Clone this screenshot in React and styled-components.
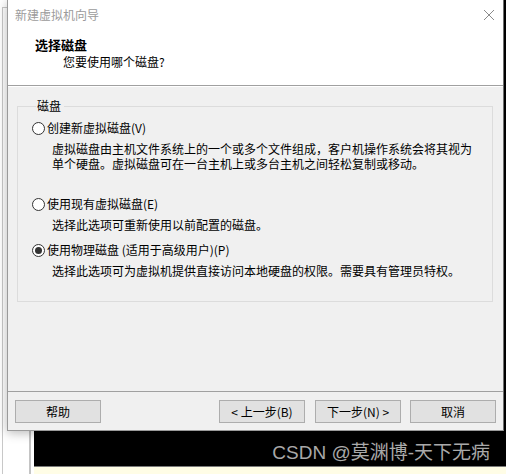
import React from "react";
import styled, { createGlobalStyle } from "styled-components";

const GlobalStyle = createGlobalStyle`
  html, body {
    margin: 0;
    padding: 0;
    background: #fff;
  }
  body {
    font-family: "Noto Sans CJK SC", "Noto Sans", sans-serif;
    font-size: 12px;
    color: #000;
  }
`;

const Desktop = styled.div`
  position: relative;
  width: 506px;
  height: 474px;
  overflow: hidden;
  background: #fff;
`;

const BackEdge = styled.div`
  position: absolute;
  left: 2px;
  top: 7px;
  width: 20px;
  bottom: 0;
  border-left: 1px solid #c8c8c8;
  border-top: 1px solid #c8c8c8;
`;

const Console = styled.div`
  position: absolute;
  left: 29px;
  top: 0;
  right: 0;
  bottom: 0;
  display: flex;
  border-left: 2px solid #c4c4c4;
  padding-left: 3px;
  background: #fff;
`;

const ConsolePane = styled.div`
  flex: 1;
  display: flex;
  flex-direction: column;
`;

const ConsoleBlack = styled.div`
  height: 466px;
  background: #000;
  border-bottom: 1px solid #7a7a7a;
`;

const ConsoleYellow = styled.div`
  flex: 1;
  background: #fffde6;
`;

const Watermark = styled.div`
  position: absolute;
  right: 16px;
  top: 441px;
  font-family: "Liberation Sans", "Noto Sans CJK SC", sans-serif;
  font-size: 19px;
  line-height: 24px;
  color: #a9a9a9;
  white-space: nowrap;
`;

const Window = styled.div`
  position: absolute;
  left: 7px;
  top: 0;
  width: 497px;
  height: 431px;
  box-sizing: border-box;
  border-left: 1px solid #9a9a9a;
  border-right: 1px solid #6e6e6e;
  border-bottom: 1px solid #9a9a9a;
  display: flex;
  flex-direction: column;
  box-shadow: 0 2px 10px rgba(0, 0, 0, 0.28);
  background: #f0f0f0;
`;

const TitleBar = styled.div`
  height: 30px;
  flex-shrink: 0;
  background: #fff;
  display: flex;
  align-items: center;
  justify-content: space-between;
  padding: 0 8px 0 7px;
`;

const TitleText = styled.span`
  color: #9b9b9b;
  font-size: 12px;
  line-height: 16px;
`;

const Header = styled.div`
  height: 56px;
  flex-shrink: 0;
  box-sizing: border-box;
  background: #fff;
  border-bottom: 1px solid #a0a0a0;
  padding-top: 7px;
`;

const HeaderTitle = styled.div`
  padding-left: 27px;
  font-size: 13px;
  font-weight: 700;
  line-height: 16px;
`;

const HeaderSub = styled.div`
  padding-left: 55px;
  margin-top: 1px;
  font-size: 12px;
  line-height: 16px;
`;

const Body = styled.div`
  flex: 1;
  display: flex;
  flex-direction: column;
  padding-top: 11px;
  border-top: 1px solid #fff;
`;

const Group = styled.fieldset`
  margin: 0 10px 0 9px;
  padding: 6px 14px 23px 14px;
  border: 1px solid #dcdcdc;
  display: flex;
  flex-direction: column;
`;

const Legend = styled.legend`
  padding: 0 3px 0 1px;
  margin-left: 4px;
  font-size: 12px;
  line-height: 16px;
`;

const Option = styled.div`
  display: flex;
  flex-direction: column;
  margin-top: ${(p) => p.$gap}px;
`;

const RadioRow = styled.label`
  display: flex;
  align-items: center;
  gap: 2px;
  font-size: 12px;
  line-height: 16px;
`;

const Radio = styled.span`
  width: 13px;
  height: 13px;
  box-sizing: border-box;
  border-radius: 50%;
  border: 1px solid #333;
  background: #fff;
  display: flex;
  align-items: center;
  justify-content: center;

  &::after {
    content: "";
    width: 7px;
    height: 7px;
    border-radius: 50%;
    background: #333;
    display: ${(p) => (p.$checked ? "block" : "none")};
  }
`;

const Desc = styled.div`
  margin-top: 5px;
  padding-left: 20px;
  font-size: 12px;
  white-space: nowrap;
`;

const DescLine = styled.div`
  height: 15px;
  line-height: 15px;
`;

const Spacer = styled.div`
  flex: 1;
`;

const Footer = styled.div`
  border-top: 1px solid #a0a0a0;
  display: flex;
  align-items: center;
  padding: 8px 7px 7px 7px;
`;

const Button = styled.button`
  width: 86px;
  height: 23px;
  box-sizing: border-box;
  border: 1px solid #adadad;
  background: #e1e1e1;
  font-family: "Noto Sans CJK SC", "Noto Sans", sans-serif;
  font-size: 12px;
  line-height: 14px;
  color: #000;
  padding: 0;
  margin-left: ${(p) => p.$gap || 0}px;
`;

const CloseIcon = () => (
  <svg width="12" height="12" viewBox="0 0 12 12">
    <path d="M1 1L11 11M11 1L1 11" stroke="#8a8a8a" strokeWidth="1" fill="none" />
  </svg>
);

const options = [
  {
    label: "创建新虚拟磁盘(V)",
    lines: [
      "虚拟磁盘由主机文件系统上的一个或多个文件组成，客户机操作系统会将其视为",
      "单个硬盘。虚拟磁盘可在一台主机上或多台主机之间轻松复制或移动。",
    ],
    gap: 0,
  },
  {
    label: "使用现有虚拟磁盘(E)",
    lines: ["选择此选项可重新使用以前配置的磁盘。"],
    gap: 25,
  },
  {
    label: "使用物理磁盘 (适用于高级用户)(P)",
    lines: ["选择此选项可为虚拟机提供直接访问本地硬盘的权限。需要具有管理员特权。"],
    gap: 10,
    checked: true,
  },
];

const App = () => {
  return (
    <Desktop>
      <GlobalStyle />
      <BackEdge />
      <Console>
        <ConsolePane>
          <ConsoleBlack />
          <ConsoleYellow />
        </ConsolePane>
      </Console>
      <Watermark>CSDN @莫渊博-天下无病</Watermark>

      <Window>
        <TitleBar>
          <TitleText>新建虚拟机向导</TitleText>
          <CloseIcon />
        </TitleBar>
        <Header>
          <HeaderTitle>选择磁盘</HeaderTitle>
          <HeaderSub>您要使用哪个磁盘?</HeaderSub>
        </Header>
        <Body>
          <Group>
            <Legend>磁盘</Legend>
            {options.map((o) => (
              <Option key={o.label} $gap={o.gap}>
                <RadioRow>
                  <Radio $checked={o.checked} />
                  {o.label}
                </RadioRow>
                <Desc>
                  {o.lines.map((l) => (
                    <DescLine key={l}>{l}</DescLine>
                  ))}
                </Desc>
              </Option>
            ))}
          </Group>
          <Spacer />
          <Footer>
            <Button>帮助</Button>
            <Spacer />
            <Button>&lt; 上一步(B)</Button>
            <Button $gap={10}>下一步(N) &gt;</Button>
            <Button $gap={9}>取消</Button>
          </Footer>
        </Body>
      </Window>
    </Desktop>
  );
};

export default App;
